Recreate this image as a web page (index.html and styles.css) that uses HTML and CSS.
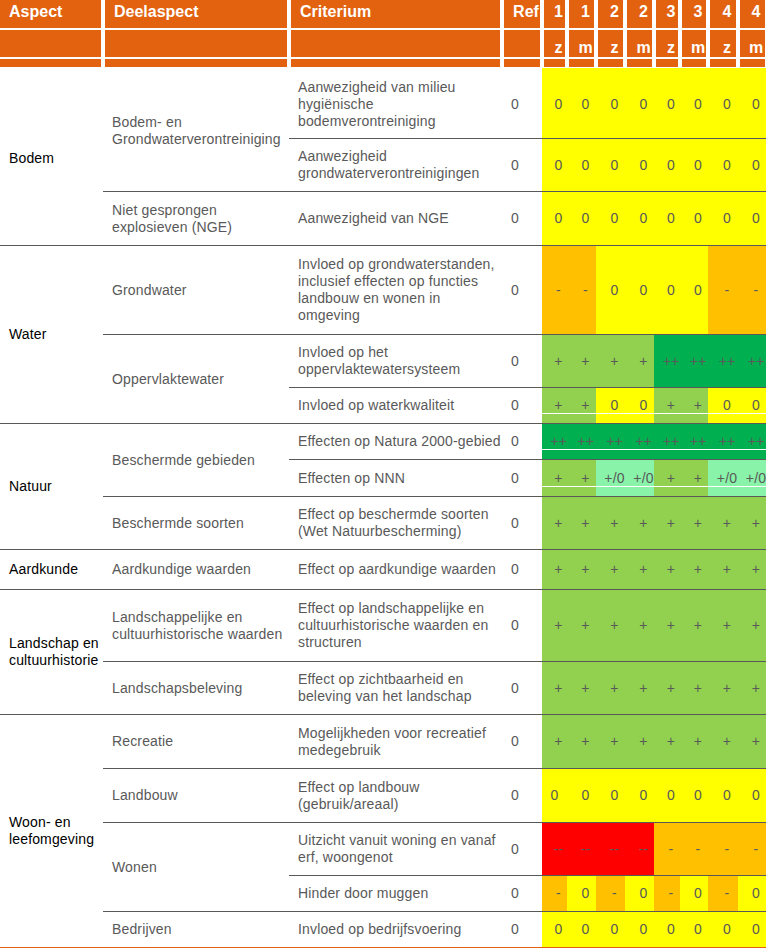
FILE: index.html
```html
<!DOCTYPE html>
<html lang="nl">
<head>
<meta charset="utf-8">
<title>Effectbeoordeling</title>
<link rel="stylesheet" href="styles.css">
</head>
<body>
<div class="sheet">
  <div class="head">
    <div class="h first t1">Aspect</div>
    <div class="h t">Deelaspect</div>
    <div class="h t">Criterium</div>
    <div class="h n">Ref</div>
    <div class="h n">1</div>
    <div class="h n">1</div>
    <div class="h n">2</div>
    <div class="h n">2</div>
    <div class="h n">3</div>
    <div class="h n">3</div>
    <div class="h n">4</div>
    <div class="h n last">4</div>

    <div class="h first r2"></div>
    <div class="h r2"></div>
    <div class="h r2"></div>
    <div class="h r2"></div>
    <div class="h n r2">z</div>
    <div class="h n r2">m</div>
    <div class="h n r2">z</div>
    <div class="h n r2">m</div>
    <div class="h n r2">z</div>
    <div class="h n r2">m</div>
    <div class="h n r2">z</div>
    <div class="h n r2 last">m</div>

    <div class="h first"></div>
    <div class="h"></div>
    <div class="h"></div>
    <div class="h"></div>
    <div class="h"></div>
    <div class="h"></div>
    <div class="h"></div>
    <div class="h"></div>
    <div class="h"></div>
    <div class="h"></div>
    <div class="h"></div>
    <div class="h last"></div>
  </div>

  <div class="body">
    <div class="row">
      <div class="c asp s3">Bodem</div>
      <div class="c sub s2">Bodem- en<br>Grondwaterverontreiniging</div>
      <div class="c crit">Aanwezigheid van milieu<br>hygiënische<br>bodemverontreiniging</div>
      <div class="c ref">0</div>
      <div class="v y">0</div><div class="v y">0</div><div class="v y">0</div><div class="v y">0</div>
      <div class="v y">0</div><div class="v y">0</div><div class="v y">0</div><div class="v y">0</div>
    </div>
    <div class="row">
      <div class="c crit">Aanwezigheid<br>grondwaterverontreinigingen</div>
      <div class="c ref">0</div>
      <div class="v y">0</div><div class="v y">0</div><div class="v y">0</div><div class="v y">0</div>
      <div class="v y">0</div><div class="v y">0</div><div class="v y">0</div><div class="v y">0</div>
    </div>
    <div class="row">
      <div class="c sub">Niet gesprongen<br>explosieven (NGE)</div>
      <div class="c crit">Aanwezigheid van NGE</div>
      <div class="c ref">0</div>
      <div class="v y">0</div><div class="v y">0</div><div class="v y">0</div><div class="v y">0</div>
      <div class="v y">0</div><div class="v y">0</div><div class="v y">0</div><div class="v y">0</div>
    </div>

    <div class="row">
      <div class="c asp s3">Water</div>
      <div class="c sub">Grondwater</div>
      <div class="c crit">Invloed op grondwaterstanden,<br>inclusief effecten op functies<br>landbouw en wonen in<br>omgeving</div>
      <div class="c ref">0</div>
      <div class="v o">-</div><div class="v o">-</div><div class="v y">0</div><div class="v y">0</div>
      <div class="v y">0</div><div class="v y">0</div><div class="v o">-</div><div class="v o">-</div>
    </div>
    <div class="row">
      <div class="c sub s2">Oppervlaktewater</div>
      <div class="c crit">Invloed op het<br>oppervlaktewatersysteem</div>
      <div class="c ref">0</div>
      <div class="v g">+</div><div class="v g">+</div><div class="v g">+</div><div class="v g">+</div>
      <div class="v dg">++</div><div class="v dg">++</div><div class="v dg">++</div><div class="v dg">++</div>
    </div>
    <div class="row">
      <div class="c crit">Invloed op waterkwaliteit</div>
      <div class="c ref">0</div>
      <div class="v g wl">+</div><div class="v g wl">+</div><div class="v y wl">0</div><div class="v y wl">0</div>
      <div class="v g wl">+</div><div class="v g wl">+</div><div class="v y wl">0</div><div class="v y wl">0</div>
    </div>

    <div class="row">
      <div class="c asp s3">Natuur</div>
      <div class="c sub s2">Beschermde gebieden</div>
      <div class="c crit">Effecten op Natura 2000-gebied</div>
      <div class="c ref">0</div>
      <div class="v dg wl">++</div><div class="v dg wl">++</div><div class="v dg wl">++</div><div class="v dg wl">++</div>
      <div class="v dg wl">++</div><div class="v dg wl">++</div><div class="v dg wl">++</div><div class="v dg wl">++</div>
    </div>
    <div class="row">
      <div class="c crit">Effecten op NNN</div>
      <div class="c ref">0</div>
      <div class="v g wl">+</div><div class="v g wl">+</div><div class="v m wl">+/0</div><div class="v m wl">+/0</div>
      <div class="v g wl">+</div><div class="v g wl">+</div><div class="v m wl">+/0</div><div class="v m wl">+/0</div>
    </div>
    <div class="row">
      <div class="c sub">Beschermde soorten</div>
      <div class="c crit">Effect op beschermde soorten<br>(Wet Natuurbescherming)</div>
      <div class="c ref">0</div>
      <div class="v g">+</div><div class="v g">+</div><div class="v g">+</div><div class="v g">+</div>
      <div class="v g">+</div><div class="v g">+</div><div class="v g">+</div><div class="v g">+</div>
    </div>

    <div class="row">
      <div class="c asp">Aardkunde</div>
      <div class="c sub">Aardkundige waarden</div>
      <div class="c crit">Effect op aardkundige waarden</div>
      <div class="c ref">0</div>
      <div class="v g">+</div><div class="v g">+</div><div class="v g">+</div><div class="v g">+</div>
      <div class="v g">+</div><div class="v g">+</div><div class="v g">+</div><div class="v g">+</div>
    </div>

    <div class="row">
      <div class="c asp s2">Landschap en<br>cultuurhistorie</div>
      <div class="c sub">Landschappelijke en<br>cultuurhistorische waarden</div>
      <div class="c crit">Effect op landschappelijke en<br>cultuurhistorische waarden en<br>structuren</div>
      <div class="c ref">0</div>
      <div class="v g">+</div><div class="v g">+</div><div class="v g">+</div><div class="v g">+</div>
      <div class="v g">+</div><div class="v g">+</div><div class="v g">+</div><div class="v g">+</div>
    </div>
    <div class="row">
      <div class="c sub">Landschapsbeleving</div>
      <div class="c crit">Effect op zichtbaarheid en<br>beleving van het landschap</div>
      <div class="c ref">0</div>
      <div class="v g">+</div><div class="v g">+</div><div class="v g">+</div><div class="v g">+</div>
      <div class="v g">+</div><div class="v g">+</div><div class="v g">+</div><div class="v g">+</div>
    </div>

    <div class="row">
      <div class="c asp s5">Woon- en<br>leefomgeving</div>
      <div class="c sub">Recreatie</div>
      <div class="c crit">Mogelijkheden voor recreatief<br>medegebruik</div>
      <div class="c ref">0</div>
      <div class="v g">+</div><div class="v g">+</div><div class="v g">+</div><div class="v g">+</div>
      <div class="v g">+</div><div class="v g">+</div><div class="v g">+</div><div class="v g">+</div>
    </div>
    <div class="row">
      <div class="c sub">Landbouw</div>
      <div class="c crit">Effect op landbouw<br>(gebruik/areaal)</div>
      <div class="c ref">0</div>
      <div class="v y v0">0</div><div class="v y">0</div><div class="v y">0</div><div class="v y">0</div>
      <div class="v y">0</div><div class="v y">0</div><div class="v y">0</div><div class="v y">0</div>
    </div>
    <div class="row">
      <div class="c sub s2">Wonen</div>
      <div class="c crit">Uitzicht vanuit woning en vanaf<br>erf, woongenot</div>
      <div class="c ref">0</div>
      <div class="v r">--</div><div class="v r">--</div><div class="v r">--</div><div class="v r">--</div>
      <div class="v o">-</div><div class="v o">-</div><div class="v o">-</div><div class="v o">-</div>
    </div>
    <div class="row">
      <div class="c crit">Hinder door muggen</div>
      <div class="c ref">0</div>
      <div class="v o">-</div><div class="v y">0</div><div class="v o">-</div><div class="v y">0</div>
      <div class="v o">-</div><div class="v y">0</div><div class="v o">-</div><div class="v y">0</div>
    </div>
    <div class="row">
      <div class="c sub">Bedrijven</div>
      <div class="c crit">Invloed op bedrijfsvoering</div>
      <div class="c ref">0</div>
      <div class="v y">0</div><div class="v y">0</div><div class="v y">0</div><div class="v y">0</div>
      <div class="v y">0</div><div class="v y">0</div><div class="v y">0</div><div class="v y">0</div>
    </div>
  </div>
</div>
</body>
</html>
```

FILE: styles.css
```css
html, body {
  margin: 0;
  padding: 0;
  background: #ffffff;
}

.sheet {
  width: 766px;
  font-family: "Liberation Sans", Arial, sans-serif;
}

.head,
.body {
  display: grid;
  grid-template-columns: 103px 186px 213px 40px 25px 29px 29px 29px 26px 28px 30px 28px;
}

/* ---------- header ---------- */
.head {
  grid-template-rows: 28px 27px 8px;
  row-gap: 2px;
  background: #ffffff;
}

.h {
  background: #e2620f;
  color: #ffffff;
  font-size: 16px;
  font-weight: bold;
  line-height: 18px;
  padding-top: 3px;
  padding-left: 11px;
  white-space: nowrap;
  overflow: hidden;
  box-shadow: inset 2px 0 #ffffff, inset -2px 0 #ffffff;
}

.h.first {
  padding-left: 9px;
  box-shadow: inset -2px 0 #ffffff;
}

.h.last {
  box-shadow: inset 2px 0 #ffffff, inset -1px 0 #ffffff;
}

.h.r2 {
  padding-top: 9px;
}

.h.n {
  text-align: center;
  padding-left: 8px;
}

/* ---------- body ---------- */
.body {
  grid-template-rows: 71px 53px 54px 89px 53px 36px 36px 37px 53px 40px 72px 53px 54px 54px 53px 36px 36px;
  border-bottom: 1px solid #e2620f;
}

.row {
  display: contents;
}

.c,
.v {
  display: flex;
  align-items: center;
  border-top: 1px solid #595959;
  font-size: 14px;
  line-height: 17px;
  letter-spacing: 0.15px;
  color: #595959;
  white-space: nowrap;
}

.row:first-child > .c,
.row:first-child > .v {
  border-top: 1px solid #ffffff;
  padding-top: 3px;
}

.c {
  padding-left: 9px;
}

.asp {
  color: #000000;
}

.v {
  justify-content: center;
  padding-left: 8px;
}

.v.v0 {
  padding-left: 0;
}

.s2 { grid-row: span 2; }
.s3 { grid-row: span 3; }
.s5 { grid-row: span 5; }

/* value colours */
.y  { background-color: #ffff00; }
.o  { background-color: #ffc000; }
.g  { background-color: #92d050; }
.dg { background-color: #00b050; }
.m  { background-color: #88f3a9; }
.r  { background-color: #ff0000; }

/* thin white rule inside some coloured cells */
.wl {
  background-image: linear-gradient(#ffffff, #ffffff);
  background-repeat: no-repeat;
  background-size: 100% 1px;
  background-position: 0 calc(100% - 9px);
}
```
